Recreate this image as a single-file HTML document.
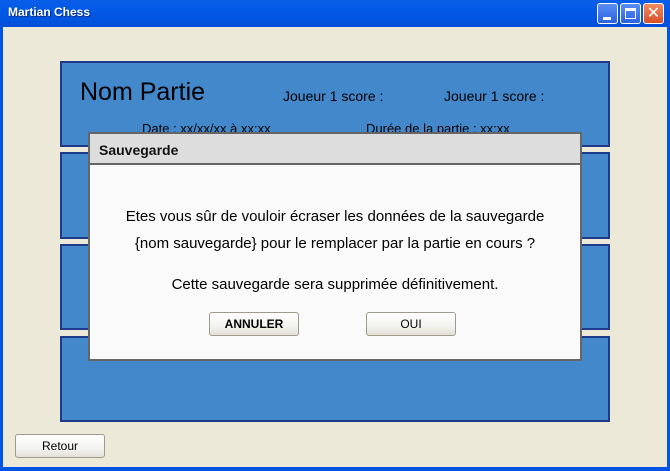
<!DOCTYPE html>
<html><head><style>
*{margin:0;padding:0;box-sizing:border-box}
body{width:670px;height:471px;overflow:hidden;background:#0054e3;font-family:"Liberation Sans",sans-serif;position:relative}
.tb{position:absolute;left:0;top:0;width:670px;height:27px;background:linear-gradient(#0a5fe8,#0058e6 40%,#0050d8);}
.tt{position:absolute;left:8px;top:5px;color:#fff;font-weight:bold;font-size:12px;text-shadow:1px 1px #0a2a80}
.wb{position:absolute;top:3px;width:21px;height:21px;border:1px solid #fff;border-radius:3px;background:linear-gradient(#5a8ef5,#2a62e0)}
.content{position:absolute;left:3px;top:27px;width:664px;height:440px;background:#ECE9D8}
.p{position:absolute;left:60px;width:550px;background:#4488cc;border:2px solid #1f3a8a}
.btn{position:absolute;height:24px;border:1px solid #a09a8a;border-radius:3px;background:linear-gradient(#fff,#f3f3f0 60%,#e2e0d8);font-size:12px;text-align:center;line-height:22px;color:#000}
</style></head><body>
<div class="tb"><div class="tt">Martian Chess</div>
<div class="wb" style="left:597px"><div style="position:absolute;left:5px;top:13px;width:8px;height:3px;background:#fff"></div></div>
<div class="wb" style="left:620px"><div style="position:absolute;left:4px;top:4px;width:11px;height:11px;border:1px solid #fff;border-top-width:3px"></div></div>
<div class="wb" style="left:643px;background:linear-gradient(#f08a60,#d8502a)"><div style="position:absolute;left:0;top:0;width:19px;height:19px;color:#fff;font-size:16px;line-height:19px;text-align:center">✕</div></div>
</div>
<div class="content"></div>
<div class="p" style="top:61px;height:86px">
<div style="position:absolute;left:18px;top:15px;font-size:25px;color:#000">Nom Partie</div>
<div style="position:absolute;left:221px;top:25px;font-size:14px">Joueur 1 score :</div>
<div style="position:absolute;left:382px;top:25px;font-size:14px">Joueur 1 score :</div>
<div style="position:absolute;left:80px;top:58px;font-size:13px">Date : xx/xx/xx à xx:xx</div>
<div style="position:absolute;left:304px;top:58px;font-size:13px">Durée de la partie : xx:xx</div>
</div>
<div class="p" style="top:152px;height:87px"></div>
<div class="p" style="top:244px;height:86px"></div>
<div class="p" style="top:336px;height:86px"></div>
<div style="position:absolute;left:88px;top:132px;width:494px;height:229px;border:2px solid #666;background:#fafafa">
<div style="height:31px;background:#dddddd;border-bottom:2px solid #666;font-weight:bold;font-size:14px;padding:8px 0 0 9px;color:#111">Sauvegarde</div>
<div style="position:absolute;left:0;width:490px;top:69px;text-align:center;font-size:15px;line-height:27px;color:#000">Etes vous sûr de vouloir écraser les données de la sauvegarde<br>{nom sauvegarde} pour le remplacer par la partie en cours ?</div>
<div style="position:absolute;left:0;width:490px;top:142px;text-align:center;font-size:15px">Cette sauvegarde sera supprimée définitivement.</div>
</div>
<div class="btn" style="left:209px;top:312px;width:90px;font-weight:bold">ANNULER</div>
<div class="btn" style="left:366px;top:312px;width:90px">OUI</div>
<div class="btn" style="left:15px;top:434px;width:90px">Retour</div>
</body></html>
